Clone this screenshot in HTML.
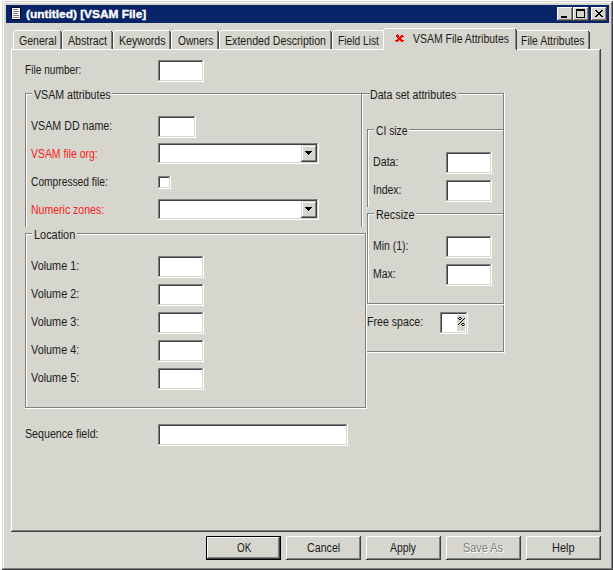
<!DOCTYPE html>
<html><head><meta charset="utf-8"><title>VSAM File</title>
<style>
html,body{margin:0;padding:0;background:#fff;width:613px;height:570px;overflow:hidden;position:relative}
i{position:absolute;display:block}
span{position:absolute;white-space:pre;font-family:"Liberation Sans",sans-serif;font-size:12px;line-height:12px;transform-origin:0 0}
</style></head><body>
<i style="left:2px;top:1px;width:611px;height:569px;background:#d6d6ce"></i><i style="left:2px;top:1px;width:610px;height:1px;background:#d6d6ce"></i><i style="left:2px;top:1px;width:1px;height:568px;background:#d6d6ce"></i><i style="left:3px;top:2px;width:608px;height:1px;background:#ffffff"></i><i style="left:3px;top:2px;width:1px;height:566px;background:#ffffff"></i><i style="left:2px;top:569px;width:611px;height:1px;background:#404040"></i><i style="left:612px;top:1px;width:1px;height:569px;background:#404040"></i><i style="left:3px;top:568px;width:609px;height:1px;background:#808080"></i><i style="left:611px;top:2px;width:1px;height:567px;background:#808080"></i><i style="left:6px;top:5px;width:603px;height:18px;background:#0a246a"></i><i style="left:11px;top:7px;width:10px;height:13px;background:#000000"></i><i style="left:12px;top:8px;width:8px;height:11px;background:#ffffff"></i><i style="left:11px;top:7px;width:1px;height:1px;background:#0a246a"></i><i style="left:20px;top:7px;width:1px;height:1px;background:#0a246a"></i><i style="left:11px;top:19px;width:1px;height:1px;background:#0a246a"></i><i style="left:20px;top:19px;width:1px;height:1px;background:#0a246a"></i><i style="left:13px;top:9px;width:5px;height:1px;background:#808080"></i><i style="left:13px;top:11px;width:6px;height:1px;background:#808080"></i><i style="left:13px;top:13px;width:5px;height:1px;background:#808080"></i><i style="left:13px;top:15px;width:6px;height:1px;background:#808080"></i><i style="left:13px;top:17px;width:6px;height:1px;background:#808080"></i><i style="left:557px;top:7px;width:16px;height:14px;background:#d6d6ce"></i><i style="left:557px;top:7px;width:15px;height:1px;background:#ffffff"></i><i style="left:557px;top:7px;width:1px;height:13px;background:#ffffff"></i><i style="left:557px;top:20px;width:16px;height:1px;background:#404040"></i><i style="left:572px;top:7px;width:1px;height:14px;background:#404040"></i><i style="left:558px;top:19px;width:14px;height:1px;background:#808080"></i><i style="left:571px;top:8px;width:1px;height:12px;background:#808080"></i><i style="left:561px;top:16px;width:6px;height:2px;background:#000000"></i><i style="left:573px;top:7px;width:16px;height:14px;background:#d6d6ce"></i><i style="left:573px;top:7px;width:15px;height:1px;background:#ffffff"></i><i style="left:573px;top:7px;width:1px;height:13px;background:#ffffff"></i><i style="left:573px;top:20px;width:16px;height:1px;background:#404040"></i><i style="left:588px;top:7px;width:1px;height:14px;background:#404040"></i><i style="left:574px;top:19px;width:14px;height:1px;background:#808080"></i><i style="left:587px;top:8px;width:1px;height:12px;background:#808080"></i><i style="left:576px;top:9px;width:9px;height:9px;background:#000000"></i><i style="left:577px;top:11px;width:7px;height:6px;background:#d6d6ce"></i><i style="left:591px;top:7px;width:16px;height:14px;background:#d6d6ce"></i><i style="left:591px;top:7px;width:15px;height:1px;background:#ffffff"></i><i style="left:591px;top:7px;width:1px;height:13px;background:#ffffff"></i><i style="left:591px;top:20px;width:16px;height:1px;background:#404040"></i><i style="left:606px;top:7px;width:1px;height:14px;background:#404040"></i><i style="left:592px;top:19px;width:14px;height:1px;background:#808080"></i><i style="left:605px;top:8px;width:1px;height:12px;background:#808080"></i><i style="left:595px;top:10px;width:1px;height:1px;background:#000000"></i><i style="left:596px;top:10px;width:1px;height:1px;background:#000000"></i><i style="left:601px;top:10px;width:1px;height:1px;background:#000000"></i><i style="left:602px;top:10px;width:1px;height:1px;background:#000000"></i><i style="left:596px;top:11px;width:1px;height:1px;background:#000000"></i><i style="left:597px;top:11px;width:1px;height:1px;background:#000000"></i><i style="left:600px;top:11px;width:1px;height:1px;background:#000000"></i><i style="left:601px;top:11px;width:1px;height:1px;background:#000000"></i><i style="left:597px;top:12px;width:1px;height:1px;background:#000000"></i><i style="left:598px;top:12px;width:1px;height:1px;background:#000000"></i><i style="left:599px;top:12px;width:1px;height:1px;background:#000000"></i><i style="left:600px;top:12px;width:1px;height:1px;background:#000000"></i><i style="left:598px;top:13px;width:1px;height:1px;background:#000000"></i><i style="left:599px;top:13px;width:1px;height:1px;background:#000000"></i><i style="left:597px;top:14px;width:1px;height:1px;background:#000000"></i><i style="left:598px;top:14px;width:1px;height:1px;background:#000000"></i><i style="left:599px;top:14px;width:1px;height:1px;background:#000000"></i><i style="left:600px;top:14px;width:1px;height:1px;background:#000000"></i><i style="left:596px;top:15px;width:1px;height:1px;background:#000000"></i><i style="left:597px;top:15px;width:1px;height:1px;background:#000000"></i><i style="left:600px;top:15px;width:1px;height:1px;background:#000000"></i><i style="left:601px;top:15px;width:1px;height:1px;background:#000000"></i><i style="left:595px;top:16px;width:1px;height:1px;background:#000000"></i><i style="left:596px;top:16px;width:1px;height:1px;background:#000000"></i><i style="left:601px;top:16px;width:1px;height:1px;background:#000000"></i><i style="left:602px;top:16px;width:1px;height:1px;background:#000000"></i><i style="left:11px;top:49px;width:590px;height:483px;background:#d6d6ce"></i><i style="left:11px;top:49px;width:589px;height:1px;background:#ffffff"></i><i style="left:11px;top:49px;width:1px;height:482px;background:#ffffff"></i><i style="left:11px;top:531px;width:590px;height:1px;background:#404040"></i><i style="left:600px;top:49px;width:1px;height:483px;background:#404040"></i><i style="left:12px;top:530px;width:588px;height:1px;background:#808080"></i><i style="left:599px;top:50px;width:1px;height:481px;background:#808080"></i><i style="left:13px;top:30px;width:49px;height:19px;background:#d6d6ce"></i><i style="left:15px;top:30px;width:45px;height:1px;background:#ffffff"></i><i style="left:14px;top:31px;width:1px;height:1px;background:#ffffff"></i><i style="left:13px;top:32px;width:1px;height:17px;background:#ffffff"></i><i style="left:60px;top:31px;width:1px;height:1px;background:#404040"></i><i style="left:60px;top:32px;width:1px;height:17px;background:#808080"></i><i style="left:61px;top:32px;width:1px;height:17px;background:#404040"></i><i style="left:62px;top:30px;width:51px;height:19px;background:#d6d6ce"></i><i style="left:64px;top:30px;width:47px;height:1px;background:#ffffff"></i><i style="left:63px;top:31px;width:1px;height:1px;background:#ffffff"></i><i style="left:62px;top:32px;width:1px;height:17px;background:#ffffff"></i><i style="left:111px;top:31px;width:1px;height:1px;background:#404040"></i><i style="left:111px;top:32px;width:1px;height:17px;background:#808080"></i><i style="left:112px;top:32px;width:1px;height:17px;background:#404040"></i><i style="left:113px;top:30px;width:58px;height:19px;background:#d6d6ce"></i><i style="left:115px;top:30px;width:54px;height:1px;background:#ffffff"></i><i style="left:114px;top:31px;width:1px;height:1px;background:#ffffff"></i><i style="left:113px;top:32px;width:1px;height:17px;background:#ffffff"></i><i style="left:169px;top:31px;width:1px;height:1px;background:#404040"></i><i style="left:169px;top:32px;width:1px;height:17px;background:#808080"></i><i style="left:170px;top:32px;width:1px;height:17px;background:#404040"></i><i style="left:171px;top:30px;width:48px;height:19px;background:#d6d6ce"></i><i style="left:173px;top:30px;width:44px;height:1px;background:#ffffff"></i><i style="left:172px;top:31px;width:1px;height:1px;background:#ffffff"></i><i style="left:171px;top:32px;width:1px;height:17px;background:#ffffff"></i><i style="left:217px;top:31px;width:1px;height:1px;background:#404040"></i><i style="left:217px;top:32px;width:1px;height:17px;background:#808080"></i><i style="left:218px;top:32px;width:1px;height:17px;background:#404040"></i><i style="left:219px;top:30px;width:113px;height:19px;background:#d6d6ce"></i><i style="left:221px;top:30px;width:109px;height:1px;background:#ffffff"></i><i style="left:220px;top:31px;width:1px;height:1px;background:#ffffff"></i><i style="left:219px;top:32px;width:1px;height:17px;background:#ffffff"></i><i style="left:330px;top:31px;width:1px;height:1px;background:#404040"></i><i style="left:330px;top:32px;width:1px;height:17px;background:#808080"></i><i style="left:331px;top:32px;width:1px;height:17px;background:#404040"></i><i style="left:332px;top:30px;width:53px;height:19px;background:#d6d6ce"></i><i style="left:334px;top:30px;width:49px;height:1px;background:#ffffff"></i><i style="left:333px;top:31px;width:1px;height:1px;background:#ffffff"></i><i style="left:332px;top:32px;width:1px;height:17px;background:#ffffff"></i><i style="left:383px;top:31px;width:1px;height:1px;background:#404040"></i><i style="left:383px;top:32px;width:1px;height:17px;background:#808080"></i><i style="left:384px;top:32px;width:1px;height:17px;background:#404040"></i><i style="left:515px;top:30px;width:75px;height:19px;background:#d6d6ce"></i><i style="left:517px;top:30px;width:71px;height:1px;background:#ffffff"></i><i style="left:516px;top:31px;width:1px;height:1px;background:#ffffff"></i><i style="left:515px;top:32px;width:1px;height:17px;background:#ffffff"></i><i style="left:588px;top:31px;width:1px;height:1px;background:#404040"></i><i style="left:588px;top:32px;width:1px;height:17px;background:#808080"></i><i style="left:589px;top:32px;width:1px;height:17px;background:#404040"></i><i style="left:383px;top:28px;width:134px;height:22px;background:#d6d6ce"></i><i style="left:385px;top:28px;width:130px;height:1px;background:#ffffff"></i><i style="left:384px;top:29px;width:1px;height:1px;background:#ffffff"></i><i style="left:383px;top:30px;width:1px;height:20px;background:#ffffff"></i><i style="left:515px;top:29px;width:1px;height:1px;background:#404040"></i><i style="left:515px;top:30px;width:1px;height:19px;background:#808080"></i><i style="left:516px;top:30px;width:1px;height:20px;background:#404040"></i><i style="left:397px;top:34px;width:1px;height:1px;background:#ff0000"></i><i style="left:396px;top:35px;width:1px;height:1px;background:#ff0000"></i><i style="left:397px;top:35px;width:1px;height:1px;background:#ff0000"></i><i style="left:398px;top:35px;width:1px;height:1px;background:#ff0000"></i><i style="left:401px;top:35px;width:1px;height:1px;background:#ff0000"></i><i style="left:402px;top:35px;width:1px;height:1px;background:#ff0000"></i><i style="left:396px;top:36px;width:1px;height:1px;background:#ff0000"></i><i style="left:397px;top:36px;width:1px;height:1px;background:#ff0000"></i><i style="left:398px;top:36px;width:1px;height:1px;background:#ff0000"></i><i style="left:400px;top:36px;width:1px;height:1px;background:#ff0000"></i><i style="left:401px;top:36px;width:1px;height:1px;background:#ff0000"></i><i style="left:402px;top:36px;width:1px;height:1px;background:#ff0000"></i><i style="left:403px;top:36px;width:1px;height:1px;background:#ff0000"></i><i style="left:397px;top:37px;width:1px;height:1px;background:#ff0000"></i><i style="left:398px;top:37px;width:1px;height:1px;background:#ff0000"></i><i style="left:399px;top:37px;width:1px;height:1px;background:#ff0000"></i><i style="left:400px;top:37px;width:1px;height:1px;background:#ff0000"></i><i style="left:401px;top:37px;width:1px;height:1px;background:#ff0000"></i><i style="left:398px;top:38px;width:1px;height:1px;background:#ff0000"></i><i style="left:399px;top:38px;width:1px;height:1px;background:#ff0000"></i><i style="left:400px;top:38px;width:1px;height:1px;background:#ff0000"></i><i style="left:397px;top:39px;width:1px;height:1px;background:#ff0000"></i><i style="left:398px;top:39px;width:1px;height:1px;background:#ff0000"></i><i style="left:399px;top:39px;width:1px;height:1px;background:#ff0000"></i><i style="left:400px;top:39px;width:1px;height:1px;background:#ff0000"></i><i style="left:401px;top:39px;width:1px;height:1px;background:#ff0000"></i><i style="left:395px;top:40px;width:1px;height:1px;background:#ff0000"></i><i style="left:396px;top:40px;width:1px;height:1px;background:#ff0000"></i><i style="left:397px;top:40px;width:1px;height:1px;background:#ff0000"></i><i style="left:398px;top:40px;width:1px;height:1px;background:#ff0000"></i><i style="left:400px;top:40px;width:1px;height:1px;background:#ff0000"></i><i style="left:401px;top:40px;width:1px;height:1px;background:#ff0000"></i><i style="left:402px;top:40px;width:1px;height:1px;background:#ff0000"></i><i style="left:403px;top:40px;width:1px;height:1px;background:#ff0000"></i><i style="left:396px;top:41px;width:1px;height:1px;background:#ff0000"></i><i style="left:397px;top:41px;width:1px;height:1px;background:#ff0000"></i><i style="left:401px;top:41px;width:1px;height:1px;background:#ff0000"></i><i style="left:402px;top:41px;width:1px;height:1px;background:#ff0000"></i><i style="left:158px;top:60px;width:46px;height:22px;background:#ffffff"></i><i style="left:158px;top:60px;width:45px;height:1px;background:#808080"></i><i style="left:158px;top:60px;width:1px;height:21px;background:#808080"></i><i style="left:158px;top:81px;width:46px;height:1px;background:#ffffff"></i><i style="left:203px;top:60px;width:1px;height:22px;background:#ffffff"></i><i style="left:159px;top:61px;width:43px;height:1px;background:#404040"></i><i style="left:159px;top:61px;width:1px;height:19px;background:#404040"></i><i style="left:159px;top:80px;width:44px;height:1px;background:#d6d6ce"></i><i style="left:202px;top:61px;width:1px;height:20px;background:#d6d6ce"></i><i style="left:25px;top:93px;width:7px;height:1px;background:#808080"></i><i style="left:112px;top:93px;width:250px;height:1px;background:#808080"></i><i style="left:26px;top:94px;width:6px;height:1px;background:#ffffff"></i><i style="left:112px;top:94px;width:250px;height:1px;background:#ffffff"></i><i style="left:25px;top:93px;width:1px;height:134px;background:#808080"></i><i style="left:26px;top:94px;width:1px;height:133px;background:#ffffff"></i><i style="left:361px;top:93px;width:1px;height:134px;background:#808080"></i><i style="left:362px;top:93px;width:1px;height:134px;background:#ffffff"></i><i style="left:158px;top:116px;width:38px;height:22px;background:#ffffff"></i><i style="left:158px;top:116px;width:37px;height:1px;background:#808080"></i><i style="left:158px;top:116px;width:1px;height:21px;background:#808080"></i><i style="left:158px;top:137px;width:38px;height:1px;background:#ffffff"></i><i style="left:195px;top:116px;width:1px;height:22px;background:#ffffff"></i><i style="left:159px;top:117px;width:35px;height:1px;background:#404040"></i><i style="left:159px;top:117px;width:1px;height:19px;background:#404040"></i><i style="left:159px;top:136px;width:36px;height:1px;background:#d6d6ce"></i><i style="left:194px;top:117px;width:1px;height:20px;background:#d6d6ce"></i><i style="left:158px;top:143px;width:161px;height:21px;background:#ffffff"></i><i style="left:158px;top:143px;width:160px;height:1px;background:#808080"></i><i style="left:158px;top:143px;width:1px;height:20px;background:#808080"></i><i style="left:158px;top:163px;width:161px;height:1px;background:#ffffff"></i><i style="left:318px;top:143px;width:1px;height:21px;background:#ffffff"></i><i style="left:159px;top:144px;width:158px;height:1px;background:#404040"></i><i style="left:159px;top:144px;width:1px;height:18px;background:#404040"></i><i style="left:159px;top:162px;width:159px;height:1px;background:#d6d6ce"></i><i style="left:317px;top:144px;width:1px;height:19px;background:#d6d6ce"></i><i style="left:301px;top:145px;width:16px;height:17px;background:#d6d6ce"></i><i style="left:301px;top:145px;width:15px;height:1px;background:#d6d6ce"></i><i style="left:301px;top:145px;width:1px;height:16px;background:#d6d6ce"></i><i style="left:301px;top:161px;width:16px;height:1px;background:#404040"></i><i style="left:316px;top:145px;width:1px;height:17px;background:#404040"></i><i style="left:302px;top:146px;width:13px;height:1px;background:#ffffff"></i><i style="left:302px;top:146px;width:1px;height:14px;background:#ffffff"></i><i style="left:302px;top:160px;width:14px;height:1px;background:#808080"></i><i style="left:315px;top:146px;width:1px;height:15px;background:#808080"></i><i style="left:305px;top:151px;width:7px;height:1px;background:#000000"></i><i style="left:306px;top:152px;width:5px;height:1px;background:#000000"></i><i style="left:307px;top:153px;width:3px;height:1px;background:#000000"></i><i style="left:308px;top:154px;width:1px;height:1px;background:#000000"></i><i style="left:158px;top:176px;width:13px;height:13px;background:#ffffff"></i><i style="left:158px;top:176px;width:12px;height:1px;background:#808080"></i><i style="left:158px;top:176px;width:1px;height:12px;background:#808080"></i><i style="left:158px;top:188px;width:13px;height:1px;background:#ffffff"></i><i style="left:170px;top:176px;width:1px;height:13px;background:#ffffff"></i><i style="left:159px;top:177px;width:10px;height:1px;background:#404040"></i><i style="left:159px;top:177px;width:1px;height:10px;background:#404040"></i><i style="left:159px;top:187px;width:11px;height:1px;background:#d6d6ce"></i><i style="left:169px;top:177px;width:1px;height:11px;background:#d6d6ce"></i><i style="left:158px;top:199px;width:161px;height:21px;background:#ffffff"></i><i style="left:158px;top:199px;width:160px;height:1px;background:#808080"></i><i style="left:158px;top:199px;width:1px;height:20px;background:#808080"></i><i style="left:158px;top:219px;width:161px;height:1px;background:#ffffff"></i><i style="left:318px;top:199px;width:1px;height:21px;background:#ffffff"></i><i style="left:159px;top:200px;width:158px;height:1px;background:#404040"></i><i style="left:159px;top:200px;width:1px;height:18px;background:#404040"></i><i style="left:159px;top:218px;width:159px;height:1px;background:#d6d6ce"></i><i style="left:317px;top:200px;width:1px;height:19px;background:#d6d6ce"></i><i style="left:301px;top:201px;width:16px;height:17px;background:#d6d6ce"></i><i style="left:301px;top:201px;width:15px;height:1px;background:#d6d6ce"></i><i style="left:301px;top:201px;width:1px;height:16px;background:#d6d6ce"></i><i style="left:301px;top:217px;width:16px;height:1px;background:#404040"></i><i style="left:316px;top:201px;width:1px;height:17px;background:#404040"></i><i style="left:302px;top:202px;width:13px;height:1px;background:#ffffff"></i><i style="left:302px;top:202px;width:1px;height:14px;background:#ffffff"></i><i style="left:302px;top:216px;width:14px;height:1px;background:#808080"></i><i style="left:315px;top:202px;width:1px;height:15px;background:#808080"></i><i style="left:305px;top:207px;width:7px;height:1px;background:#000000"></i><i style="left:306px;top:208px;width:5px;height:1px;background:#000000"></i><i style="left:307px;top:209px;width:3px;height:1px;background:#000000"></i><i style="left:308px;top:210px;width:1px;height:1px;background:#000000"></i><i style="left:361px;top:93px;width:9px;height:1px;background:#808080"></i><i style="left:458px;top:93px;width:45px;height:1px;background:#808080"></i><i style="left:362px;top:94px;width:8px;height:1px;background:#ffffff"></i><i style="left:458px;top:94px;width:45px;height:1px;background:#ffffff"></i><i style="left:361px;top:93px;width:1px;height:134px;background:#808080"></i><i style="left:362px;top:94px;width:1px;height:133px;background:#ffffff"></i><i style="left:503px;top:93px;width:1px;height:259px;background:#808080"></i><i style="left:504px;top:93px;width:1px;height:260px;background:#ffffff"></i><i style="left:361px;top:351px;width:143px;height:1px;background:#808080"></i><i style="left:361px;top:352px;width:144px;height:1px;background:#ffffff"></i><i style="left:367px;top:129px;width:7px;height:1px;background:#808080"></i><i style="left:368px;top:130px;width:6px;height:1px;background:#ffffff"></i><i style="left:409px;top:129px;width:95px;height:1px;background:#808080"></i><i style="left:409px;top:130px;width:94px;height:1px;background:#ffffff"></i><i style="left:367px;top:129px;width:1px;height:78px;background:#808080"></i><i style="left:368px;top:130px;width:1px;height:77px;background:#ffffff"></i><i style="left:446px;top:152px;width:46px;height:22px;background:#ffffff"></i><i style="left:446px;top:152px;width:45px;height:1px;background:#808080"></i><i style="left:446px;top:152px;width:1px;height:21px;background:#808080"></i><i style="left:446px;top:173px;width:46px;height:1px;background:#ffffff"></i><i style="left:491px;top:152px;width:1px;height:22px;background:#ffffff"></i><i style="left:447px;top:153px;width:43px;height:1px;background:#404040"></i><i style="left:447px;top:153px;width:1px;height:19px;background:#404040"></i><i style="left:447px;top:172px;width:44px;height:1px;background:#d6d6ce"></i><i style="left:490px;top:153px;width:1px;height:20px;background:#d6d6ce"></i><i style="left:446px;top:180px;width:46px;height:22px;background:#ffffff"></i><i style="left:446px;top:180px;width:45px;height:1px;background:#808080"></i><i style="left:446px;top:180px;width:1px;height:21px;background:#808080"></i><i style="left:446px;top:201px;width:46px;height:1px;background:#ffffff"></i><i style="left:491px;top:180px;width:1px;height:22px;background:#ffffff"></i><i style="left:447px;top:181px;width:43px;height:1px;background:#404040"></i><i style="left:447px;top:181px;width:1px;height:19px;background:#404040"></i><i style="left:447px;top:200px;width:44px;height:1px;background:#d6d6ce"></i><i style="left:490px;top:181px;width:1px;height:20px;background:#d6d6ce"></i><i style="left:367px;top:213px;width:7px;height:1px;background:#808080"></i><i style="left:368px;top:214px;width:6px;height:1px;background:#ffffff"></i><i style="left:416px;top:213px;width:88px;height:1px;background:#808080"></i><i style="left:416px;top:214px;width:87px;height:1px;background:#ffffff"></i><i style="left:367px;top:213px;width:1px;height:91px;background:#808080"></i><i style="left:368px;top:214px;width:1px;height:91px;background:#ffffff"></i><i style="left:367px;top:303px;width:137px;height:1px;background:#808080"></i><i style="left:366px;top:304px;width:139px;height:1px;background:#ffffff"></i><i style="left:446px;top:236px;width:46px;height:22px;background:#ffffff"></i><i style="left:446px;top:236px;width:45px;height:1px;background:#808080"></i><i style="left:446px;top:236px;width:1px;height:21px;background:#808080"></i><i style="left:446px;top:257px;width:46px;height:1px;background:#ffffff"></i><i style="left:491px;top:236px;width:1px;height:22px;background:#ffffff"></i><i style="left:447px;top:237px;width:43px;height:1px;background:#404040"></i><i style="left:447px;top:237px;width:1px;height:19px;background:#404040"></i><i style="left:447px;top:256px;width:44px;height:1px;background:#d6d6ce"></i><i style="left:490px;top:237px;width:1px;height:20px;background:#d6d6ce"></i><i style="left:446px;top:264px;width:46px;height:22px;background:#ffffff"></i><i style="left:446px;top:264px;width:45px;height:1px;background:#808080"></i><i style="left:446px;top:264px;width:1px;height:21px;background:#808080"></i><i style="left:446px;top:285px;width:46px;height:1px;background:#ffffff"></i><i style="left:491px;top:264px;width:1px;height:22px;background:#ffffff"></i><i style="left:447px;top:265px;width:43px;height:1px;background:#404040"></i><i style="left:447px;top:265px;width:1px;height:19px;background:#404040"></i><i style="left:447px;top:284px;width:44px;height:1px;background:#d6d6ce"></i><i style="left:490px;top:265px;width:1px;height:20px;background:#d6d6ce"></i><i style="left:25px;top:227px;width:342px;height:182px;background:#d6d6ce"></i><i style="left:25px;top:233px;width:7px;height:1px;background:#808080"></i><i style="left:77px;top:233px;width:289px;height:1px;background:#808080"></i><i style="left:26px;top:234px;width:6px;height:1px;background:#ffffff"></i><i style="left:77px;top:234px;width:289px;height:1px;background:#ffffff"></i><i style="left:25px;top:233px;width:1px;height:175px;background:#808080"></i><i style="left:26px;top:234px;width:1px;height:174px;background:#ffffff"></i><i style="left:365px;top:233px;width:1px;height:175px;background:#808080"></i><i style="left:366px;top:233px;width:1px;height:176px;background:#ffffff"></i><i style="left:25px;top:407px;width:341px;height:1px;background:#808080"></i><i style="left:25px;top:408px;width:342px;height:1px;background:#ffffff"></i><i style="left:158px;top:256px;width:46px;height:22px;background:#ffffff"></i><i style="left:158px;top:256px;width:45px;height:1px;background:#808080"></i><i style="left:158px;top:256px;width:1px;height:21px;background:#808080"></i><i style="left:158px;top:277px;width:46px;height:1px;background:#ffffff"></i><i style="left:203px;top:256px;width:1px;height:22px;background:#ffffff"></i><i style="left:159px;top:257px;width:43px;height:1px;background:#404040"></i><i style="left:159px;top:257px;width:1px;height:19px;background:#404040"></i><i style="left:159px;top:276px;width:44px;height:1px;background:#d6d6ce"></i><i style="left:202px;top:257px;width:1px;height:20px;background:#d6d6ce"></i><i style="left:158px;top:284px;width:46px;height:22px;background:#ffffff"></i><i style="left:158px;top:284px;width:45px;height:1px;background:#808080"></i><i style="left:158px;top:284px;width:1px;height:21px;background:#808080"></i><i style="left:158px;top:305px;width:46px;height:1px;background:#ffffff"></i><i style="left:203px;top:284px;width:1px;height:22px;background:#ffffff"></i><i style="left:159px;top:285px;width:43px;height:1px;background:#404040"></i><i style="left:159px;top:285px;width:1px;height:19px;background:#404040"></i><i style="left:159px;top:304px;width:44px;height:1px;background:#d6d6ce"></i><i style="left:202px;top:285px;width:1px;height:20px;background:#d6d6ce"></i><i style="left:158px;top:312px;width:46px;height:22px;background:#ffffff"></i><i style="left:158px;top:312px;width:45px;height:1px;background:#808080"></i><i style="left:158px;top:312px;width:1px;height:21px;background:#808080"></i><i style="left:158px;top:333px;width:46px;height:1px;background:#ffffff"></i><i style="left:203px;top:312px;width:1px;height:22px;background:#ffffff"></i><i style="left:159px;top:313px;width:43px;height:1px;background:#404040"></i><i style="left:159px;top:313px;width:1px;height:19px;background:#404040"></i><i style="left:159px;top:332px;width:44px;height:1px;background:#d6d6ce"></i><i style="left:202px;top:313px;width:1px;height:20px;background:#d6d6ce"></i><i style="left:158px;top:340px;width:46px;height:22px;background:#ffffff"></i><i style="left:158px;top:340px;width:45px;height:1px;background:#808080"></i><i style="left:158px;top:340px;width:1px;height:21px;background:#808080"></i><i style="left:158px;top:361px;width:46px;height:1px;background:#ffffff"></i><i style="left:203px;top:340px;width:1px;height:22px;background:#ffffff"></i><i style="left:159px;top:341px;width:43px;height:1px;background:#404040"></i><i style="left:159px;top:341px;width:1px;height:19px;background:#404040"></i><i style="left:159px;top:360px;width:44px;height:1px;background:#d6d6ce"></i><i style="left:202px;top:341px;width:1px;height:20px;background:#d6d6ce"></i><i style="left:158px;top:368px;width:46px;height:22px;background:#ffffff"></i><i style="left:158px;top:368px;width:45px;height:1px;background:#808080"></i><i style="left:158px;top:368px;width:1px;height:21px;background:#808080"></i><i style="left:158px;top:389px;width:46px;height:1px;background:#ffffff"></i><i style="left:203px;top:368px;width:1px;height:22px;background:#ffffff"></i><i style="left:159px;top:369px;width:43px;height:1px;background:#404040"></i><i style="left:159px;top:369px;width:1px;height:19px;background:#404040"></i><i style="left:159px;top:388px;width:44px;height:1px;background:#d6d6ce"></i><i style="left:202px;top:369px;width:1px;height:20px;background:#d6d6ce"></i><i style="left:440px;top:312px;width:28px;height:22px;background:#ffffff"></i><i style="left:440px;top:312px;width:27px;height:1px;background:#808080"></i><i style="left:440px;top:312px;width:1px;height:21px;background:#808080"></i><i style="left:440px;top:333px;width:28px;height:1px;background:#ffffff"></i><i style="left:467px;top:312px;width:1px;height:22px;background:#ffffff"></i><i style="left:441px;top:313px;width:25px;height:1px;background:#404040"></i><i style="left:441px;top:313px;width:1px;height:19px;background:#404040"></i><i style="left:441px;top:332px;width:26px;height:1px;background:#d6d6ce"></i><i style="left:466px;top:313px;width:1px;height:20px;background:#d6d6ce"></i><i style="left:457px;top:315px;width:8px;height:16px;background:#d6d6ce"></i><i style="left:459px;top:317px;width:1px;height:1px;background:#000000"></i><i style="left:460px;top:317px;width:1px;height:1px;background:#000000"></i><i style="left:458px;top:318px;width:1px;height:1px;background:#000000"></i><i style="left:461px;top:318px;width:1px;height:1px;background:#000000"></i><i style="left:464px;top:318px;width:1px;height:1px;background:#000000"></i><i style="left:459px;top:319px;width:1px;height:1px;background:#000000"></i><i style="left:460px;top:319px;width:1px;height:1px;background:#000000"></i><i style="left:463px;top:319px;width:1px;height:1px;background:#000000"></i><i style="left:462px;top:320px;width:1px;height:1px;background:#000000"></i><i style="left:461px;top:321px;width:1px;height:1px;background:#000000"></i><i style="left:460px;top:322px;width:1px;height:1px;background:#000000"></i><i style="left:459px;top:323px;width:1px;height:1px;background:#000000"></i><i style="left:462px;top:323px;width:1px;height:1px;background:#000000"></i><i style="left:463px;top:323px;width:1px;height:1px;background:#000000"></i><i style="left:458px;top:324px;width:1px;height:1px;background:#000000"></i><i style="left:461px;top:324px;width:1px;height:1px;background:#000000"></i><i style="left:464px;top:324px;width:1px;height:1px;background:#000000"></i><i style="left:462px;top:325px;width:1px;height:1px;background:#000000"></i><i style="left:463px;top:325px;width:1px;height:1px;background:#000000"></i><i style="left:158px;top:424px;width:190px;height:22px;background:#ffffff"></i><i style="left:158px;top:424px;width:189px;height:1px;background:#808080"></i><i style="left:158px;top:424px;width:1px;height:21px;background:#808080"></i><i style="left:158px;top:445px;width:190px;height:1px;background:#ffffff"></i><i style="left:347px;top:424px;width:1px;height:22px;background:#ffffff"></i><i style="left:159px;top:425px;width:187px;height:1px;background:#404040"></i><i style="left:159px;top:425px;width:1px;height:19px;background:#404040"></i><i style="left:159px;top:444px;width:188px;height:1px;background:#d6d6ce"></i><i style="left:346px;top:425px;width:1px;height:20px;background:#d6d6ce"></i><i style="left:206px;top:536px;width:75px;height:24px;background:#d6d6ce"></i><i style="left:206px;top:536px;width:75px;height:1px;background:#000000"></i><i style="left:206px;top:559px;width:75px;height:1px;background:#000000"></i><i style="left:206px;top:536px;width:1px;height:24px;background:#000000"></i><i style="left:280px;top:536px;width:1px;height:24px;background:#000000"></i><i style="left:207px;top:537px;width:72px;height:1px;background:#ffffff"></i><i style="left:207px;top:537px;width:1px;height:21px;background:#ffffff"></i><i style="left:207px;top:558px;width:73px;height:1px;background:#404040"></i><i style="left:279px;top:537px;width:1px;height:22px;background:#404040"></i><i style="left:208px;top:557px;width:71px;height:1px;background:#808080"></i><i style="left:278px;top:538px;width:1px;height:20px;background:#808080"></i><i style="left:286px;top:536px;width:75px;height:24px;background:#d6d6ce"></i><i style="left:286px;top:536px;width:74px;height:1px;background:#ffffff"></i><i style="left:286px;top:536px;width:1px;height:23px;background:#ffffff"></i><i style="left:286px;top:559px;width:75px;height:1px;background:#404040"></i><i style="left:360px;top:536px;width:1px;height:24px;background:#404040"></i><i style="left:287px;top:558px;width:73px;height:1px;background:#808080"></i><i style="left:359px;top:537px;width:1px;height:22px;background:#808080"></i><i style="left:366px;top:536px;width:75px;height:24px;background:#d6d6ce"></i><i style="left:366px;top:536px;width:74px;height:1px;background:#ffffff"></i><i style="left:366px;top:536px;width:1px;height:23px;background:#ffffff"></i><i style="left:366px;top:559px;width:75px;height:1px;background:#404040"></i><i style="left:440px;top:536px;width:1px;height:24px;background:#404040"></i><i style="left:367px;top:558px;width:73px;height:1px;background:#808080"></i><i style="left:439px;top:537px;width:1px;height:22px;background:#808080"></i><i style="left:446px;top:536px;width:75px;height:24px;background:#d6d6ce"></i><i style="left:446px;top:536px;width:74px;height:1px;background:#ffffff"></i><i style="left:446px;top:536px;width:1px;height:23px;background:#ffffff"></i><i style="left:446px;top:559px;width:75px;height:1px;background:#404040"></i><i style="left:520px;top:536px;width:1px;height:24px;background:#404040"></i><i style="left:447px;top:558px;width:73px;height:1px;background:#808080"></i><i style="left:519px;top:537px;width:1px;height:22px;background:#808080"></i><i style="left:526px;top:536px;width:75px;height:24px;background:#d6d6ce"></i><i style="left:526px;top:536px;width:74px;height:1px;background:#ffffff"></i><i style="left:526px;top:536px;width:1px;height:23px;background:#ffffff"></i><i style="left:526px;top:559px;width:75px;height:1px;background:#404040"></i><i style="left:600px;top:536px;width:1px;height:24px;background:#404040"></i><i style="left:527px;top:558px;width:73px;height:1px;background:#808080"></i><i style="left:599px;top:537px;width:1px;height:22px;background:#808080"></i>
<span style="left:26.00px;top:9px;color:#ffffff;font-size:11px;line-height:11px;font-weight:bold;-webkit-text-stroke:0.35px #fff;transform:scaleX(1.0811);">(untitled) [VSAM File]</span><span style="left:19.12px;top:35px;color:#000000;opacity:0.87;transform:scaleX(0.8780);">General</span><span style="left:68.00px;top:35px;color:#000000;opacity:0.87;transform:scaleX(0.8864);">Abstract</span><span style="left:119.12px;top:35px;color:#000000;opacity:0.87;transform:scaleX(0.8824);">Keywords</span><span style="left:178.00px;top:35px;color:#000000;opacity:0.87;transform:scaleX(0.8537);">Owners</span><span style="left:225.12px;top:35px;color:#000000;opacity:0.87;transform:scaleX(0.8850);">Extended Description</span><span style="left:338.15px;top:35px;color:#000000;opacity:0.87;transform:scaleX(0.8511);">Field List</span><span style="left:521.13px;top:35px;color:#000000;opacity:0.87;transform:scaleX(0.8732);">File Attributes</span><span style="left:413.00px;top:33px;color:#000000;opacity:0.87;transform:scaleX(0.8727);">VSAM File Attributes</span><span style="left:25.15px;top:64px;color:#000000;opacity:0.87;transform:scaleX(0.8462);">File number:</span><span style="left:34.00px;top:89px;color:#000000;opacity:0.87;transform:scaleX(0.8837);">VSAM attributes</span><span style="left:31.00px;top:120px;color:#000000;opacity:0.87;transform:scaleX(0.8889);">VSAM DD name:</span><span style="left:31.00px;top:148px;color:#ff0000;opacity:0.87;transform:scaleX(0.8684);">VSAM file org:</span><span style="left:31.15px;top:176px;color:#000000;opacity:0.87;transform:scaleX(0.8523);">Compressed file:</span><span style="left:31.12px;top:204px;color:#ff0000;opacity:0.87;transform:scaleX(0.8765);">Numeric zones:</span><span style="left:370.11px;top:89px;color:#000000;opacity:0.87;transform:scaleX(0.8854);">Data set attributes</span><span style="left:376.14px;top:125px;color:#000000;opacity:0.87;transform:scaleX(0.8571);">CI size</span><span style="left:373.11px;top:156px;color:#000000;opacity:0.87;transform:scaleX(0.8889);">Data:</span><span style="left:373.13px;top:184px;color:#000000;opacity:0.87;transform:scaleX(0.8710);">Index:</span><span style="left:376.10px;top:209px;color:#000000;opacity:0.87;transform:scaleX(0.9024);">Recsize</span><span style="left:373.13px;top:240px;color:#000000;opacity:0.87;transform:scaleX(0.8718);">Min (1):</span><span style="left:373.12px;top:268px;color:#000000;opacity:0.87;transform:scaleX(0.8750);">Max:</span><span style="left:34.09px;top:229px;color:#000000;opacity:0.87;transform:scaleX(0.9091);">Location</span><span style="left:31.00px;top:260px;color:#000000;opacity:0.87;transform:scaleX(0.9038);">Volume 1:</span><span style="left:31.00px;top:288px;color:#000000;opacity:0.87;transform:scaleX(0.9038);">Volume 2:</span><span style="left:31.00px;top:316px;color:#000000;opacity:0.87;transform:scaleX(0.9038);">Volume 3:</span><span style="left:31.00px;top:344px;color:#000000;opacity:0.87;transform:scaleX(0.9038);">Volume 4:</span><span style="left:31.00px;top:372px;color:#000000;opacity:0.87;transform:scaleX(0.9038);">Volume 5:</span><span style="left:367.11px;top:316px;color:#000000;opacity:0.87;transform:scaleX(0.8852);">Free space:</span><span style="left:25.11px;top:428px;color:#000000;opacity:0.87;transform:scaleX(0.8889);">Sequence field:</span><span style="left:237.00px;top:542px;color:#000000;opacity:0.87;transform:scaleX(0.8235);">OK</span><span style="left:307.11px;top:542px;color:#000000;opacity:0.87;transform:scaleX(0.8889);">Cancel</span><span style="left:390.00px;top:542px;color:#000000;opacity:0.87;transform:scaleX(0.8667);">Apply</span><span style="left:464.09px;top:543px;color:#ffffff;transform:scaleX(0.9070);">Save As</span><span style="left:463.09px;top:542px;color:#808080;transform:scaleX(0.9070);">Save As</span><span style="left:552.09px;top:542px;color:#000000;opacity:0.87;transform:scaleX(0.9130);">Help</span>
</body></html>
